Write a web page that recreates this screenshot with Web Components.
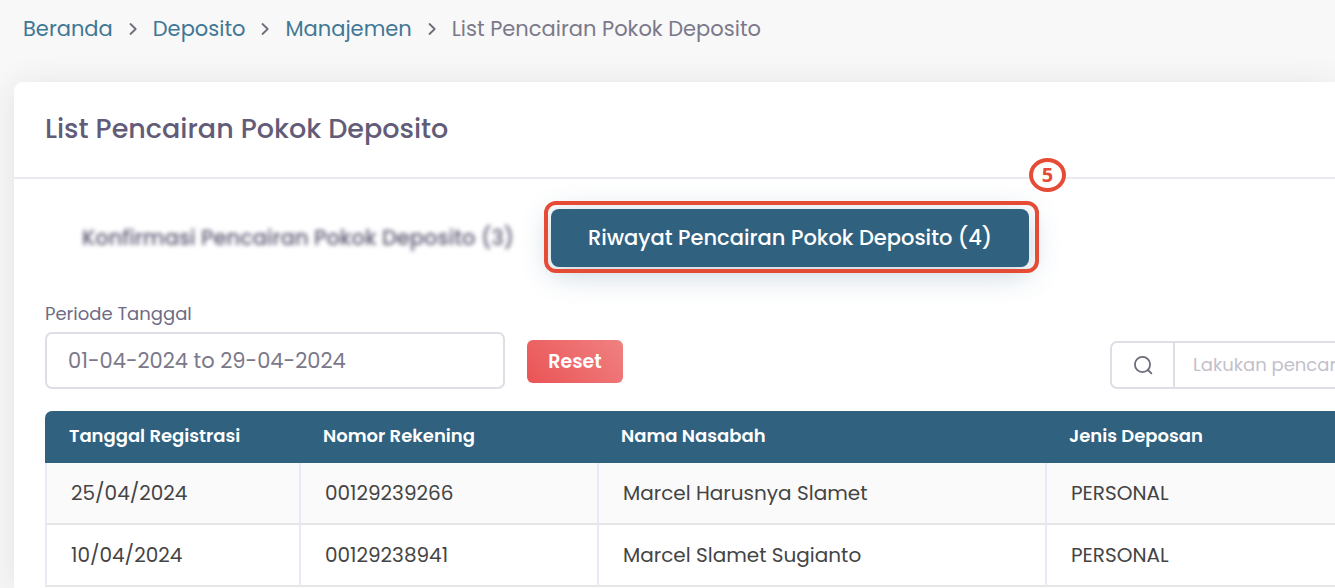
<!DOCTYPE html>
<html lang="id">
<head>
<meta charset="utf-8">
<title>List Pencairan Pokok Deposito</title>
<style>
  body {
    margin: 0;
    background: #f8f8f8;
    color: #6e6b7b;
    font-family: Poppins, Inter, sans-serif;
    font-size: 20px;
    --primary: #306280;
    --heading: #625c78;
    --line: #dfdde5;
    --accent: #e64b35;
  }
</style>
</head>
<body>
<deposit-page></deposit-page>

<script>
  const define = (name, html) => {
    const template = document.createElement('template');
    template.innerHTML = html;
    customElements.define(name, class extends HTMLElement {
      constructor() {
        super();
        this.attachShadow({ mode: 'open' }).append(template.content.cloneNode(true));
      }
    });
  };

  define('crumb-trail', `
    <style>
      :host { display: block; }
      nav { display: flex; align-items: center; }
    </style>
    <nav aria-label="Breadcrumb"><slot></slot></nav>`);

  define('crumb-link', `
    <style>
      :host { display: flex; align-items: center; color: #3f7795; font-size: 21px; line-height: 32px; }
      ::slotted(a) { color: inherit; text-decoration: none; }
      svg { width: 10px; height: 14px; margin: 0 15px; flex: none; }
    </style>
    <slot></slot>
    <svg viewBox="0 0 10 14" fill="none" stroke="#6e6b7b" stroke-width="1.8" stroke-linecap="round" stroke-linejoin="round" aria-hidden="true"><path d="M2.5 2 7.7 7l-5.2 5"/></svg>`);

  define('crumb-current', `
    <style>:host { display: block; color: #7b788a; font-size: 21px; line-height: 32px; }</style>
    <slot></slot>`);

  define('content-card', `
    <style>
      :host { display: block; background: #fff; border-radius: 9px 0 0 0; box-shadow: 0 4px 34px rgba(34, 41, 47, .11); }
      header { padding: 29px 31px 30px; border-bottom: 2px solid #ebe9f1; }
      h1 { margin: 0; font-size: 27px; line-height: 36px; font-weight: 500; color: var(--heading); }
      .body { padding: 30px 0 0 31px; }
    </style>
    <header><h1><slot name="title"></slot></h1></header>
    <div class="body"><slot></slot></div>`);

  define('tab-strip', `
    <style>:host { display: grid; grid-template-columns: 506px 478px; height: 58px; }</style>
    <slot></slot>`);

  define('tab-button', `
    <style>
      :host { display: block; position: relative; }
      button {
        width: 100%; height: 100%; border: 0; border-radius: 8px; padding: 0 16px;
        background: none; color: #5e5873; font: 500 21px/32px Poppins, Inter, sans-serif; white-space: nowrap;
      }
      :host([active]) button { background: var(--primary); color: #fff; box-shadow: 0 6px 30px rgba(48, 98, 128, .3); }
      :host([obscured]) button { filter: blur(2px); }
    </style>
    <button type="button"><slot></slot></button>
    <slot name="marker"></slot>`);

  define('step-marker', `
    <style>
      :host { position: absolute; inset: -8px -10px -6px -7px; border: 4px solid var(--accent); border-radius: 12px; pointer-events: none; }
      span {
        position: absolute; top: -47px; right: -31px; box-sizing: border-box; width: 37px; height: 34px;
        border: 4px solid var(--accent); border-radius: 50%; background: #fff; color: var(--accent);
        font: 700 20px/26px "Noto Sans", sans-serif; text-align: center;
      }
    </style>
    <span><slot></slot></span>`);

  define('filter-bar', `
    <style>
      :host { display: flex; align-items: flex-end; margin-top: 35px; }
    </style>
    <slot></slot>`);

  define('date-field', `
    <style>
      :host { display: block; width: 460px; }
      label { display: block; font-size: 18px; line-height: 24px; margin-bottom: 6px; color: #6e6b85; }
      input {
        display: block; box-sizing: border-box; width: 100%; height: 57px; padding: 0 21px;
        border: 2px solid var(--line); border-radius: 7px; background: #fff; color: #7b788a;
        font: 400 21px/32px Poppins, Inter, sans-serif;
      }
    </style>
    <label for="period">Periode Tanggal</label>
    <input id="period" type="text" value="01-04-2024 to 29-04-2024">`);

  define('reset-button', `
    <style>
      :host { display: block; margin: 0 0 6px 22px; }
      button {
        display: block; width: 96px; height: 43px; border: 0; border-radius: 6px; padding: 0;
        background: linear-gradient(47deg, #ea5455, #f08182); color: #fff; font: 600 19px/28px Poppins, Inter, sans-serif;
      }
    </style>
    <button type="button"><slot></slot></button>`);

  define('search-box', `
    <style>
      :host { display: flex; box-sizing: border-box; width: 225px; height: 48px; margin-left: auto; border: 2px solid var(--line); border-right: 0; border-radius: 7px 0 0 7px; overflow: hidden; }
      label { display: grid; place-items: center; width: 61px; flex: none; border-right: 2px solid var(--line); }
      svg { width: 20px; height: 20px; }
      input { flex: 1; min-width: 0; border: 0; padding: 0 0 0 18px; background: none; font: 400 18px/28px Poppins, Inter, sans-serif; color: #6e6b7b; }
      input::placeholder { color: #c2c0cb; opacity: 1; }
    </style>
    <label for="query" aria-label="Cari">
      <svg viewBox="0 0 20 20" fill="none" stroke="#6e6b7b" stroke-width="1.8" stroke-linecap="round" aria-hidden="true"><circle cx="9.5" cy="9.5" r="7.6"/><path d="m15 15 3.4 3.4"/></svg>
    </label>
    <input id="query" type="text" placeholder="Lakukan pencarian">`);

  define('deposit-table', `
    <style>
      :host { display: block; margin-top: 22px; }
      table { width: 100%; table-layout: fixed; border-collapse: separate; border-spacing: 0; text-align: left; }
      .date { width: 254px; }
      .account { width: 298px; }
      .name { width: 448px; }
      th { height: 52px; padding: 0 24px 2px; background: var(--primary); color: #fff; font-size: 18px; line-height: 28px; font-weight: 600; box-sizing: border-box; }
      th:first-child { border-top-left-radius: 7px; }
      td { height: 62px; box-sizing: border-box; padding: 0 24px; border-bottom: 2px solid #e6e6e6; border-left: 2px solid #e8eaf5; color: #444; font-size: 20px; line-height: 30px; }
      tbody tr:nth-child(odd) td { background: #fafafa; }
    </style>
    <table>
      <colgroup><col class="date"><col class="account"><col class="name"><col></colgroup>
      <thead><tr><th scope="col">Tanggal Registrasi</th><th scope="col">Nomor Rekening</th><th scope="col">Nama Nasabah</th><th scope="col">Jenis Deposan</th></tr></thead>
      <tbody>
        <tr><td>25/04/2024</td><td>00129239266</td><td>Marcel Harusnya Slamet</td><td>PERSONAL</td></tr>
        <tr><td>10/04/2024</td><td>00129238941</td><td>Marcel Slamet Sugianto</td><td>PERSONAL</td></tr>
      </tbody>
    </table>`);

  define('deposit-page', `
    <style>
      :host { display: flex; flex-direction: column; box-sizing: border-box; min-height: 100vh; padding: 13px 0 0 14px; overflow: hidden; }
      crumb-trail { padding-left: 9px; margin-bottom: 37px; }
      content-card { flex: 1; }
    </style>
    <crumb-trail>
      <crumb-link><a href="#beranda">Beranda</a></crumb-link>
      <crumb-link><a href="#deposito">Deposito</a></crumb-link>
      <crumb-link><a href="#manajemen">Manajemen</a></crumb-link>
      <crumb-current>List Pencairan Pokok Deposito</crumb-current>
    </crumb-trail>
    <content-card>
      <span slot="title">List Pencairan Pokok Deposito</span>
      <tab-strip>
        <tab-button obscured>Konfirmasi Pencairan Pokok Deposito (3)</tab-button>
        <tab-button active>Riwayat Pencairan Pokok Deposito (4)<step-marker slot="marker">5</step-marker></tab-button>
      </tab-strip>
      <filter-bar>
        <date-field></date-field>
        <reset-button>Reset</reset-button>
        <search-box></search-box>
      </filter-bar>
      <deposit-table></deposit-table>
    </content-card>`);
</script>
</body>
</html>
